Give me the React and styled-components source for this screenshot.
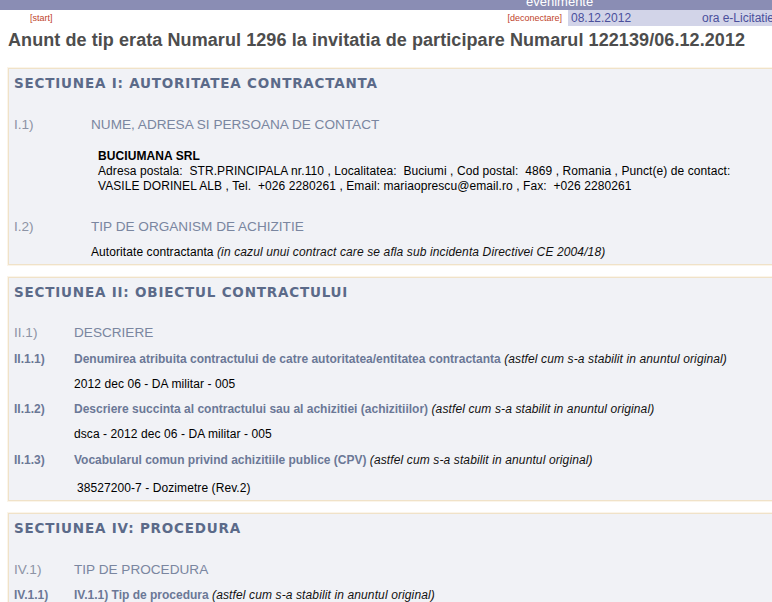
import React from "react";
import styled, { createGlobalStyle } from "styled-components";

const Global = createGlobalStyle`
  html, body { margin: 0; padding: 0; background: #ffffff; overflow: hidden; }
  body { font-family: "Liberation Sans", Arial, sans-serif; font-size: 12px; color: #000; }
`;

const Page = styled.div`
  width: 880px;
`;

const TopBar = styled.div`
  height: 10px;
  background: #8a8db4;
  overflow: hidden;
  display: flex;
  padding-left: 526px;
`;

const TopItem = styled.span`
  color: #ffffff;
  font-size: 13px;
  line-height: 13px;
  margin-top: -5px;
`;

const InfoRow = styled.div`
  display: flex;
  align-items: stretch;
  height: 16px;
`;

const LeftLinks = styled.div`
  flex: 0 0 568px;
  display: flex;
  justify-content: space-between;
  align-items: center;
  padding: 0 6px 0 30px;
  box-sizing: border-box;
`;

const SmallLink = styled.span`
  color: #c0432b;
  font-size: 9px;
`;

const DateCell = styled.div`
  flex: 0 0 300px;
  background: #d2d4e8;
  display: flex;
  align-items: center;
  color: #4a4f9c;
  font-size: 12px;
  padding-left: 3px;
`;

const DateText = styled.span`
  width: 131px;
`;

const Title = styled.h1`
  margin: 0;
  padding: 4px 0 0 8px;
  height: 26px;
  font-size: 18px;
  line-height: 20px;
  font-weight: bold;
  letter-spacing: 0.08px;
  color: #4d4d4d;
  white-space: nowrap;
`;

const Section = styled.section`
  margin: ${(p) => p.$top}px 0 0 8px;
  background: #f1f2f6;
  border: 1px solid #f0e2c8;
  box-shadow: 0 0 0 1px #fbf5ea;
  padding: 6px 0 ${(p) => p.$bottom}px 5px;
`;

const SectionTitle = styled.h2`
  margin: 0 0 ${(p) => p.$gap}px 0;
  font-family: "DejaVu Sans", Verdana, sans-serif;
  font-size: 13.5px;
  line-height: 17px;
  font-weight: bold;
  color: #5b6a89;
  letter-spacing: 0.8px;
`;

const HeadRow = styled.div`
  display: grid;
  grid-template-columns: ${(p) => p.$col}px 1fr;
  font-size: 13.6px;
  line-height: 16px;
  color: #7a86a0;
  margin-top: ${(p) => p.$mt || 0}px;
`;

const HeadLabel = styled.span`
  color: #8d93a5;
`;

const SubRow = styled.div`
  display: grid;
  grid-template-columns: ${(p) => p.$col}px 1fr;
  font-size: 12px;
  line-height: 15px;
  margin-top: ${(p) => p.$mt || 0}px;
`;

const SubLabel = styled.span`
  color: #6b7896;
  font-weight: bold;
`;

const SubTitle = styled.span`
  color: #6b7896;
  font-weight: bold;
`;

const Note = styled.i`
  color: #111;
  letter-spacing: 0.12px;
`;

const Body = styled.div`
  padding-left: ${(p) => p.$indent}px;
  margin-top: ${(p) => p.$mt || 0}px;
  font-size: 12px;
  line-height: 15px;
  letter-spacing: 0.08px;
  color: #000;
  white-space: pre;
`;

const Strong = styled.div`
  font-weight: bold;
`;

export default function App() {
  return (
    <Page>
      <Global />
      <TopBar>
        <TopItem>evenimente</TopItem>
      </TopBar>
      <InfoRow>
        <LeftLinks>
          <SmallLink>[start]</SmallLink>
          <SmallLink>[deconectare]</SmallLink>
        </LeftLinks>
        <DateCell>
          <DateText>08.12.2012</DateText>
          <span>ora e-Licitatie</span>
        </DateCell>
      </InfoRow>
      <Title>
        Anunt de tip erata Numarul 1296 la invitatia de participare Numarul 122139/06.12.2012
      </Title>

      <Section $top={12} $bottom={4}>
        <SectionTitle $gap={25}>SECTIUNEA I: AUTORITATEA CONTRACTANTA</SectionTitle>
        <HeadRow $col={77}>
          <HeadLabel>I.1)</HeadLabel>
          <span>NUME, ADRESA SI PERSOANA DE CONTACT</span>
        </HeadRow>
        <Body $indent={84} $mt={16}>
          <Strong>BUCIUMANA SRL</Strong>
          {"Adresa postala:  STR.PRINCIPALA nr.110 , Localitatea:  Buciumi , Cod postal:  4869 , Romania , Punct(e) de contact:\nVASILE DORINEL ALB , Tel.  +026 2280261 , Email: mariaoprescu@email.ro , Fax:  +026 2280261"}
        </Body>
        <HeadRow $col={77} $mt={25}>
          <HeadLabel>I.2)</HeadLabel>
          <span>TIP DE ORGANISM DE ACHIZITIE</span>
        </HeadRow>
        <Body $indent={77} $mt={10}>
          Autoritate contractanta <Note>(in cazul unui contract care se afla sub incidenta Directivei CE 2004/18)</Note>
        </Body>
      </Section>

      <Section $top={12} $bottom={4}>
        <SectionTitle $gap={24}>SECTIUNEA II: OBIECTUL CONTRACTULUI</SectionTitle>
        <HeadRow $col={60}>
          <HeadLabel>II.1)</HeadLabel>
          <span>DESCRIERE</span>
        </HeadRow>
        <SubRow $col={60} $mt={11}>
          <SubLabel>II.1.1)</SubLabel>
          <span>
            <SubTitle>Denumirea atribuita contractului de catre autoritatea/entitatea contractanta</SubTitle>{" "}
            <Note>(astfel cum s-a stabilit in anuntul original)</Note>
          </span>
        </SubRow>
        <Body $indent={60} $mt={10}>2012 dec 06 - DA militar - 005</Body>
        <SubRow $col={60} $mt={10}>
          <SubLabel>II.1.2)</SubLabel>
          <span>
            <SubTitle>Descriere succinta al contractului sau al achizitiei (achizitiilor)</SubTitle>{" "}
            <Note>(astfel cum s-a stabilit in anuntul original)</Note>
          </span>
        </SubRow>
        <Body $indent={60} $mt={10}>dsca - 2012 dec 06 - DA militar - 005</Body>
        <SubRow $col={60} $mt={11}>
          <SubLabel>II.1.3)</SubLabel>
          <span>
            <SubTitle>Vocabularul comun privind achizitiile publice (CPV)</SubTitle>{" "}
            <Note>(astfel cum s-a stabilit in anuntul original)</Note>
          </span>
        </SubRow>
        <Body $indent={63} $mt={13}>38527200-7 - Dozimetre (Rev.2)</Body>
      </Section>

      <Section $top={12} $bottom={40}>
        <SectionTitle $gap={25}>SECTIUNEA IV: PROCEDURA</SectionTitle>
        <HeadRow $col={60}>
          <HeadLabel>IV.1)</HeadLabel>
          <span>TIP DE PROCEDURA</span>
        </HeadRow>
        <SubRow $col={60} $mt={10}>
          <SubLabel>IV.1.1)</SubLabel>
          <span>
            <SubTitle>IV.1.1) Tip de procedura</SubTitle>{" "}
            <Note>(astfel cum s-a stabilit in anuntul original)</Note>
          </span>
        </SubRow>
      </Section>
    </Page>
  );
}
